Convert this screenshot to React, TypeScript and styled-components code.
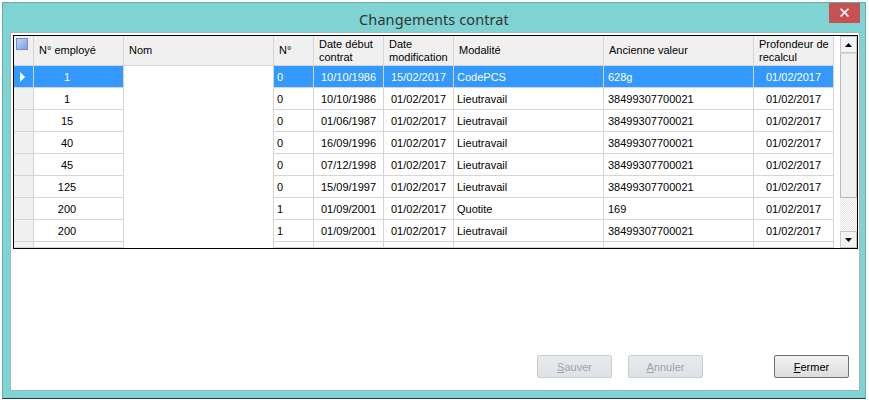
import styled, { createGlobalStyle } from 'styled-components';

const GlobalStyle = createGlobalStyle`
  html, body {
    margin: 0;
    padding: 0;
    background: #ffffff;
    font-family: 'Liberation Sans', Arial, sans-serif;
  }
`;

const COLS = [20, 90, 150, 40, 70, 70, 150, 150, 80];
const TEMPLATE = COLS.map((w) => `${w}px`).join(' ');

const Window = styled.div`
  margin: 2px 0 0 2px;
  width: 864px;
  height: 397px;
  box-sizing: border-box;
  background: #7fd3d2;
  border: 1px solid #6aa9a9;
  border-bottom-color: #333;
  display: flex;
  flex-direction: column;
`;

const TitleBar = styled.div`
  height: 29px;
  display: grid;
  grid-template-columns: 1fr auto 1fr;
  align-items: start;
`;

const Title = styled.div`
  grid-column: 2;
  padding-top: 6px;
  font-family: 'Noto Sans', 'Open Sans', sans-serif;
  font-size: 14.5px;
  color: #333;
  letter-spacing: 0.1px;
`;

const CloseButton = styled.button`
  grid-column: 3;
  justify-self: end;
  margin: 0 5px 0 0;
  width: 31px;
  height: 20px;
  border: none;
  padding: 0;
  background: #c75050;
  color: #fff;
  font-size: 15px;
  line-height: 20px;
  font-family: 'DejaVu Sans', sans-serif;
  display: flex;
  align-items: center;
  justify-content: center;
`;

const Client = styled.div`
  flex: 1;
  margin: 0 5px 7px 7px;
  background: #fff;
  border: 1px solid #9fb9b9;
  display: flex;
  flex-direction: column;
  padding: 2px 3px 12px 2px;
`;

const GridFrame = styled.div`
  width: 845px;
  height: 214px;
  box-sizing: border-box;
  border: 1px solid #000;
  display: flex;
  overflow: hidden;
  font-size: 11px;
`;

const GridBody = styled.div`
  flex: 1;
  overflow: hidden;
`;

const HeaderRow = styled.div`
  display: grid;
  grid-template-columns: ${TEMPLATE};
  height: 30px;
  background: linear-gradient(to right, #f0f0f0 820px, #fff 820px);
`;

const HeaderCell = styled.div`
  border-right: 1px solid #d5d5d5;
  border-bottom: 1px solid #d5d5d5;
  padding: 0 0 0 5px;
  display: flex;
  align-items: center;
  line-height: 13px;
  color: #000;
  overflow: hidden;
`;

const CornerCell = styled.div`
  border-right: 1px solid #d5d5d5;
  border-bottom: 1px solid #d5d5d5;
  padding: 2px 0 0 2px;
`;

const SelectAll = styled.div`
  width: 10px;
  height: 10px;
  border: 1px solid #6f8fc8;
  background: linear-gradient(135deg, #c3d5f4, #7e9fdc);
`;

const DataRow = styled.div<{ $selected?: boolean; $partial?: boolean }>`
  display: grid;
  grid-template-columns: ${TEMPLATE};
  height: ${(p) => (p.$partial ? 6 : 22)}px;
  color: ${(p) => (p.$selected ? '#fff' : '#000')};
`;

const RowHeader = styled.div<{ $selected?: boolean }>`
  background: ${(p) => (p.$selected ? '#3399ff' : '#f0f0f0')};
  border-right: 1px solid #d5d5d5;
  border-bottom: 1px solid #d5d5d5;
  display: flex;
  align-items: center;
  padding-left: 6px;
`;

const Arrow = styled.div`
  width: 0;
  height: 0;
  border-top: 5px solid transparent;
  border-bottom: 5px solid transparent;
  border-left: 5px solid #fff;
`;

const Cell = styled.div<{ $selected?: boolean; $align?: 'left' | 'center'; $pad?: string }>`
  background: ${(p) => (p.$selected ? '#3399ff' : '#fff')};
  border-right: 1px solid #d5d5d5;
  border-bottom: 1px solid #d5d5d5;
  display: flex;
  align-items: center;
  justify-content: ${(p) => (p.$align === 'center' ? 'center' : 'flex-start')};
  padding: ${(p) => p.$pad || '0 0 0 3px'};
  white-space: nowrap;
  overflow: hidden;
`;

const NameCell = styled.div`
  background: #fff;
  border-right: 1px solid #d5d5d5;
`;

const Scrollbar = styled.div`
  width: 17px;
  display: flex;
  flex-direction: column;
  background-color: #f4f4f4;
  background-image: repeating-conic-gradient(#e6e6e6 0 25%, #fafafa 0 50%);
  background-size: 2px 2px;
`;

const ScrollButton = styled.div`
  height: 17px;
  box-sizing: border-box;
  border: 1px solid #c8c8c8;
  background: #f3f3f3;
  display: flex;
  align-items: center;
  justify-content: center;
`;

const Thumb = styled.div`
  height: 145px;
  box-sizing: border-box;
  border: 1px solid #b8b8b8;
  border-top-color: #d8d8d8;
  background: #f0f0f0;
`;

const TrackFill = styled.div`
  flex: 1;
`;

const Spacer = styled.div`
  flex: 1;
`;

const ButtonBar = styled.div`
  display: flex;
  justify-content: flex-end;
  align-items: center;
  padding-right: 7px;
`;

const Button = styled.button<{ $gap?: number }>`
  width: 75px;
  height: 23px;
  margin-left: ${(p) => p.$gap ?? 0}px;
  box-sizing: border-box;
  font-family: 'Liberation Sans', Arial, sans-serif;
  font-size: 11px;
  padding: 0;
  border-radius: 2px;
  color: #000;
  border: 1px solid #707070;
  background: linear-gradient(#f2f2f2, #dddddd);

  &:disabled {
    color: #a3a3a3;
    border-color: #c9ced3;
    background: linear-gradient(#e8ebee, #dde2e6);
  }
`;

interface IRow {
  emp: string;
  num: string;
  debut: string;
  modif: string;
  modalite: string;
  ancienne: string;
  profondeur: string;
}

const rows: IRow[] = [
  { emp: '1', num: '0', debut: '10/10/1986', modif: '15/02/2017', modalite: 'CodePCS', ancienne: '628g', profondeur: '01/02/2017' },
  { emp: '1', num: '0', debut: '10/10/1986', modif: '01/02/2017', modalite: 'Lieutravail', ancienne: '38499307700021', profondeur: '01/02/2017' },
  { emp: '15', num: '0', debut: '01/06/1987', modif: '01/02/2017', modalite: 'Lieutravail', ancienne: '38499307700021', profondeur: '01/02/2017' },
  { emp: '40', num: '0', debut: '16/09/1996', modif: '01/02/2017', modalite: 'Lieutravail', ancienne: '38499307700021', profondeur: '01/02/2017' },
  { emp: '45', num: '0', debut: '07/12/1998', modif: '01/02/2017', modalite: 'Lieutravail', ancienne: '38499307700021', profondeur: '01/02/2017' },
  { emp: '125', num: '0', debut: '15/09/1997', modif: '01/02/2017', modalite: 'Lieutravail', ancienne: '38499307700021', profondeur: '01/02/2017' },
  { emp: '200', num: '1', debut: '01/09/2001', modif: '01/02/2017', modalite: 'Quotite', ancienne: '169', profondeur: '01/02/2017' },
  { emp: '200', num: '1', debut: '01/09/2001', modif: '01/02/2017', modalite: 'Lieutravail', ancienne: '38499307700021', profondeur: '01/02/2017' },
];

const headers = ['N° employé', 'Nom', 'N°', 'Date début contrat', 'Date modification', 'Modalité', 'Ancienne valeur', 'Profondeur de recalcul'];

const GridRow = ({ row, selected }: { row: IRow; selected?: boolean }) => (
  <DataRow $selected={selected}>
    <RowHeader $selected={selected}>{selected && <Arrow />}</RowHeader>
    <Cell $selected={selected} $align="center" $pad="0 23px 0 0">{row.emp}</Cell>
    <NameCell />
    <Cell $selected={selected}>{row.num}</Cell>
    <Cell $selected={selected} $align="center" $pad="0">{row.debut}</Cell>
    <Cell $selected={selected} $align="center" $pad="0">{row.modif}</Cell>
    <Cell $selected={selected}>{row.modalite}</Cell>
    <Cell $selected={selected} $pad="0 0 0 4px">{row.ancienne}</Cell>
    <Cell $selected={selected} $align="center" $pad="0">{row.profondeur}</Cell>
  </DataRow>
);

const Triangle = ({ up }: { up?: boolean }) => (
  <svg width="7" height="4" viewBox="0 0 7 4">
    <path d={up ? 'M0 4 L3.5 0 L7 4 Z' : 'M0 0 L3.5 4 L7 0 Z'} fill="#000" />
  </svg>
);

export default function App() {
  return (
    <>
      <GlobalStyle />
      <Window>
        <TitleBar>
          <Title>Changements contrat</Title>
          <CloseButton>✕</CloseButton>
        </TitleBar>
        <Client>
          <GridFrame>
            <GridBody>
              <HeaderRow>
                <CornerCell>
                  <SelectAll />
                </CornerCell>
                {headers.map((h) => (
                  <HeaderCell key={h}>{h}</HeaderCell>
                ))}
              </HeaderRow>
              {rows.map((r, i) => (
                <GridRow key={i} row={r} selected={i === 0} />
              ))}
              <DataRow $partial>
                <RowHeader />
                {COLS.slice(1).map((_, i) => (i === 1 ? <NameCell key={i} /> : <Cell key={i} />))}
              </DataRow>
            </GridBody>
            <Scrollbar>
              <ScrollButton>
                <Triangle up />
              </ScrollButton>
              <Thumb />
              <TrackFill />
              <ScrollButton>
                <Triangle />
              </ScrollButton>
            </Scrollbar>
          </GridFrame>
          <Spacer />
          <ButtonBar>
            <Button disabled>
              <u>S</u>auver
            </Button>
            <Button disabled $gap={16}>
              <u>A</u>nnuler
            </Button>
            <Button $gap={71}>
              <u>F</u>ermer
            </Button>
          </ButtonBar>
        </Client>
      </Window>
    </>
  );
}
